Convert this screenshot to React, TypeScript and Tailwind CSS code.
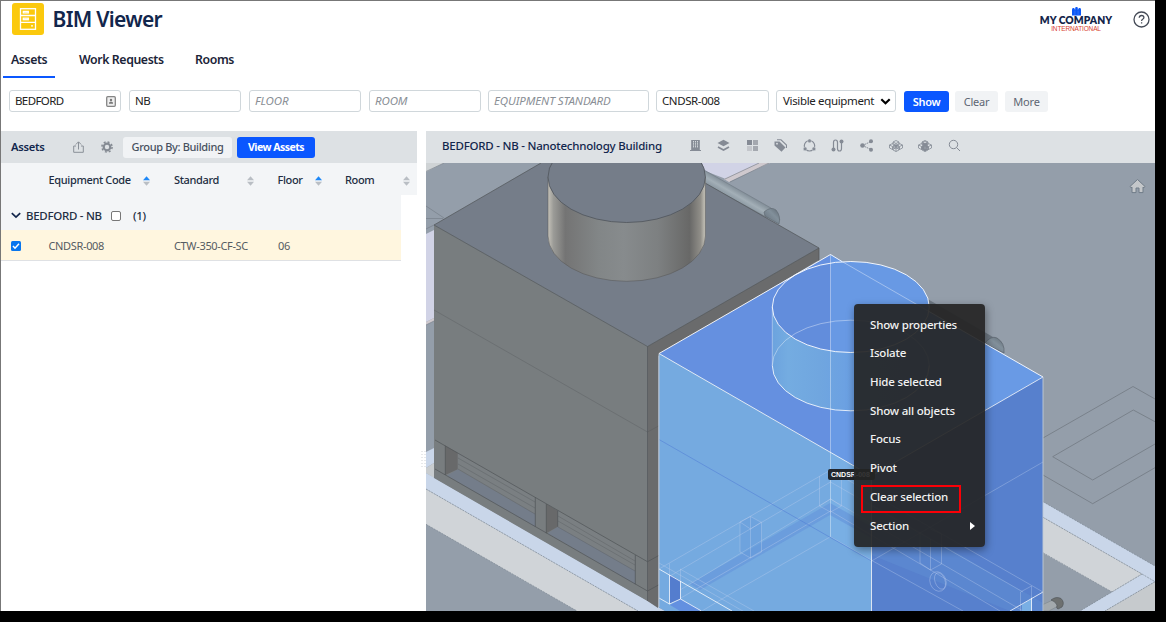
import React from "react";

const field = "h-[22px] rounded-[3px] border border-[#d0d7db] bg-white pl-[5px] text-[11.5px] leading-[20px] tracking-[-0.4px] whitespace-nowrap text-[#222]";

function AppIcon() {
  return (
    <svg className="h-8 w-8" viewBox="0 0 32 32" fill="none">
      <rect width="32" height="32" rx="3" fill="#fbc90d" />
      <g stroke="#fff" strokeWidth="1.3">
        <rect x="8.5" y="5.7" width="15" height="20.6" />
        <path d="M8.500 12.500h15M8.500 19.300h15" />
        <rect x="11.300" y="8.400" width="5" height="1.500" />
        <rect x="11.300" y="15.200" width="5" height="1.500" />
        <path d="M19 22.800h2" />
      </g>
    </svg>
  );
}

function Logo() {
  return (
    <div className="flex w-[74px] flex-col items-center pt-[6px]">
      <svg className="h-[9px] w-[9px]" viewBox="0 0 9 9">
        <g fill="#0b57f7">
          <rect x="0" y="2.300" width="9" height="6.200" />
          <rect x="0.200" y="1" width="2.400" height="2.500" rx="1" />
          <rect x="3.200" y="0" width="2.600" height="3" rx="1.100" />
          <rect x="6.400" y="1" width="2.400" height="2.500" rx="1" />
        </g>
        <path d="M2.900 3.500v5M6.100 3.500v5" stroke="#5b8df9" strokeWidth=".5" />
      </svg>
      <div className="-mt-px whitespace-nowrap font-[Lato] text-[10.300px] leading-[11px] font-extrabold tracking-[0.050px] text-[#14254a]">MY COMPANY</div>
      <div className="whitespace-nowrap font-['Liberation_Sans'] text-[6.500px] leading-[6px] tracking-[-0.150px] text-[#d8402f]">INTERNATIONAL</div>
    </div>
  );
}

function Sort({ active = false }: { active?: boolean }) {
  return (
    <svg className="h-[10px] w-[7px]" viewBox="0 0 7 10">
      <path d="M0 4.300 3.500 .3 7 4.300z" fill={active ? "#1e88f7" : "#b9bec4"} />
      <path d="M0 5.700 3.500 9.700 7 5.700z" fill="#b9bec4" />
    </svg>
  );
}

function Cubes({ solid = false }: { solid?: boolean }) {
  return (
    <svg className="h-[12px] w-[14px]" viewBox="0 0 14 12" fill="none" stroke="#858b95" strokeWidth=".8">
      <path d="M7 .5 10 2v3L7 6.500 4 5V2zM4 2l3 1.500L10 2M7 3.500v3" fill={solid ? "#a9adb4" : "none"} />
      <path d="M3.500 3.500 6.500 5v3l-3 1.500-3-1.500V5zM.5 5l3 1.500 3-1.500M3.500 6.500v3" />
      <path d="M10.500 3.500 13.500 5v3l-3 1.500-3-1.500V5zM7.500 5l3 1.500 3-1.500M10.500 6.500v3" />
      <path d="M7 5.500 10 7v3l-3 1.500L4 10V7zM4 7l3 1.500L10 7M7 8.500v3" />
      {solid && <path d="M3.500 6.500 6 5.500v2.700L3.500 9.500zM8 5.500l2.500 1v3L8 8.200zM5 2.500l2 1 2-1v2L7 5.500l-2-1zM4.500 7.500 7 8.700v2.500L4.500 10zM9.500 7.500 7 8.700v2.500L9.500 10z" fill="#858b95" stroke="none" />}
    </svg>
  );
}

function Toolbar() {
  const c = "#858b95";
  const s = "h-[13px] w-[13px]";
  return (
    <div className="flex items-center gap-[15.600px] pt-[1px]">
      <svg className={s} viewBox="0 0 13 13">
        <path d="M2.200 1h8.600v10H12v1H1v-1h1.200z" fill={c} />
        <path d="M4.500 2v7M6.500 2v7M8.500 2v7" stroke="#dde1e4" strokeWidth=".9" strokeDasharray="1.500 .7" />
      </svg>
      <svg className={s} viewBox="0 0 13 13">
        <path d="M6.500 .8 12.500 4 6.500 7.300.5 4z" fill={c} />
        <path d="M1 8l5.500 3L12 8" fill="none" stroke={c} strokeWidth="1.700" />
      </svg>
      <svg className={s} viewBox="0 0 13 13">
        <path d="M1 1h5v5H1z" fill={c} />
        <path d="M7 1h5v5H7zM7 7h5v5H7z" fill="#a4a8af" />
        <path d="M1 7h5v5H1z" fill="#c3c6cb" />
      </svg>
      <svg className={s} viewBox="0 0 13 13">
        <path d="M.5 2.500h5l6 6-4 4.200-7-6.200z" fill={c} />
        <circle cx="3" cy="4.700" r=".9" fill="#dde1e4" />
        <path d="M3 .8h4L12.500 6v3" fill="none" stroke={c} strokeWidth="1.100" />
      </svg>
      <svg className={s} viewBox="0 0 13 13">
        <circle cx="6.500" cy="6.800" r="5.200" fill="none" stroke={c} strokeWidth="1.200" />
        <g fill={c} stroke="#dde1e4" strokeWidth=".5"><circle cx="6.500" cy="1.900" r="1.900" /><circle cx="2.100" cy="9.900" r="1.900" /><circle cx="10.900" cy="9.900" r="1.900" /></g>
      </svg>
      <svg className={s} viewBox="0 0 13 13">
        <path d="M2.500 11V3.500Q2.500 1 4.500 1T6.500 3.500v6Q6.500 12 8.500 12t2-2.500V2" fill="none" stroke={c} strokeWidth="1.200" />
        <g fill={c}><circle cx="2.500" cy="10.500" r="2" /><circle cx="10.500" cy="2.500" r="2" /></g>
      </svg>
      <svg className={s} viewBox="0 0 13 13" fill={c}>
        <path d="M2.500 6.500 11 2.500M2.500 6.500 11 10.500" stroke={c} strokeDasharray="1.500 .8" />
        <circle cx="2.500" cy="6.500" r="2.300" /><circle cx="11" cy="2.300" r="2" /><circle cx="11" cy="10.700" r="2" />
      </svg>
      <Cubes />
      <Cubes solid />
      <svg className={s} viewBox="0 0 13 13" fill="none" stroke={c} strokeWidth="1">
        <circle cx="5.500" cy="5.500" r="4.200" /><path d="m8.500 8.500 3.500 3.500" />
      </svg>
    </div>
  );
}

function Scene() {
  return (
    <svg className="block h-[448px] w-[729px]" viewBox="426 163 729 448">
      <defs>
        <linearGradient id="drum">
          <stop offset="0" stopColor="#c5c2b9" /><stop offset=".035" stopColor="#9b9b97" />
          <stop offset=".11" stopColor="#747474" /><stop offset=".32" stopColor="#828687" />
          <stop offset=".48" stopColor="#878b8d" /><stop offset=".7" stopColor="#7d8081" />
          <stop offset=".9" stopColor="#686867" /><stop offset=".97" stopColor="#918f89" /><stop offset="1" stopColor="#c9c7bd" />
        </linearGradient>
        <linearGradient id="blueDrum">
          <stop offset="0" stopColor="#6ca3de" /><stop offset=".1" stopColor="#74ace1" />
          <stop offset=".3" stopColor="#70a6df" /><stop offset=".5" stopColor="#6ba0e3" /><stop offset="1" stopColor="#699de5" />
        </linearGradient>
        <linearGradient id="pipe" gradientUnits="userSpaceOnUse" x1="738" y1="188" x2="731" y2="200">
          <stop offset="0" stopColor="#7d8993" /><stop offset=".5" stopColor="#a3afb7" /><stop offset="1" stopColor="#84919b" />
        </linearGradient>
        <linearGradient id="elbow" x1="0" y1="1" x2="1" y2="0">
          <stop offset="0" stopColor="#626c76" /><stop offset=".6" stopColor="#82909b" /><stop offset="1" stopColor="#5e6871" />
        </linearGradient>
        <clipPath id="blueBody"><path d="M659 353.500 830.500 254.500 850 261 900 273 929 304 1043 377V611H659z" /></clipPath>
      </defs>
      <rect x="426" y="163" width="729" height="448" fill="#949eaa" />
      <path d="M426 163h18l-18 9z" fill="#cfd3d5" />
      <path d="M426 234l8-4v88l-8 4zM702 163h58l-34 16-21-8z" fill="#d1d3e6" />
      <path d="M426 322l8-4v3l-8 4zM759 163h11l-41 19-5-3z" fill="#cfc9ce" />
      <g stroke="#727b85" strokeWidth=".6" fill="none">
        <path d="M426 171.500 444 163M426 206l18 12M426 218.500h17M426 229l8-4M426 325l8-4M759 163l-34 16M769 163l-39 19" />
      </g>
      <path d="M426 452l8-4v15l-8 5z" fill="#c9d6e9" /><path d="M426 468l8-5v15l-8-5z" fill="#c8cccf" />
      <path d="M426 489v35.300L577 611h61z" fill="#d0d4d8" />
      <path d="M426 473 665 611h-27L426 489z" fill="#c9d6e9" />
      <path d="M1043 501.700 1155 566v15.700L1105 611h-25l32-19 30-18-99-56.700z" fill="#c9d6e9" />
      <path d="M1043 517.300 1142 574l-30 18-69-39z" fill="#d0d4d8" /><path d="M1155 581.700V611h-50z" fill="#c6cacd" />
      <g stroke="#7c8894" strokeWidth=".7" fill="none">
        <path d="M426 524.300 577 611M426 489 638 611M1043 517.300 1142 574l-62 37M1142 574l13 7.700-50 29.300M1043 552.700 1112 592M1043 501.700 1155 566" strokeDasharray="2 1" />
      </g>
      <g stroke="#727a83" strokeWidth=".8" fill="none">
        <path d="M1043 438 1133 386.500 1155 399M1155 421.700 1133.300 410 1052.700 456.700 1092.700 480 1155 444M1043 475 1092.700 503.700 1155 467.700" />
      </g>
      <path d="M704 170 771 208l9 12-14-3-62-34z" fill="url(#pipe)" stroke="#727d86" strokeWidth=".7" />
      <path d="M764 212q7-6 12-2 5 6 3 14l-14-8z" fill="url(#elbow)" stroke="#626b74" strokeWidth=".7" />
      <path d="M928 299.300 993 337l-9 9-56-34z" fill="#6f7984" />
      <path d="M984 344q7-9 13-6 8 5 7 15l-18-9z" fill="url(#elbow)" stroke="#59626c" strokeWidth=".7" />
      <path d="M1043 604.500 1055 599l3 7-9 5h-6z" fill="#a3a9ad" stroke="#7e868c" strokeWidth=".6" />
      <path d="M1051 600q5-4 10-1.500 4 4 1 8.500l-4 2q-2 0-1-4-2-4-6-5z" fill="#6d7070" stroke="#52585b" strokeWidth=".7" />

      <path d="M434 225 541 163H670L819 248 647.500 346.500z" fill="#757d89" />
      <path d="M434 225 647.500 346.500V601L434 478z" fill="#787d7f" />
      <path d="M647.500 346.500 819 248v12L658 356v252l-10.500-7z" fill="#6a6b6c" />
      <path d="M445.300 445.700 535.300 497.300v29.400L445.300 475zM546.300 504 635.300 555v29.300L546.300 533.300z" fill="#7a7f82" />
      <path d="M457.700 469.300 535.300 514.300v12.400L447 475.700zM557.700 526.700 635.300 571v13.300L547.700 533.300z" fill="#747d8a" />
      <path d="M445.300 445.700 457.700 452.700v16.600l-12.400 5.700zM546.300 504l11.400 6.700v16l-11.400 6.600z" fill="#68696a" />
      <g fill="none" stroke="#505457" strokeWidth=".7">
        <path d="M541 163 434 225 647.500 346.500 819 248 670 163M647.500 346.500V601M819 248v14" />
        <path d="M435 440 647.500 561.700l11-6M435 469l212.500 122 11-6M445.300 445.700V475M535.300 497.300v29.400M546.300 504v29.300M635.300 555v29.300M557.700 510.700v16" />
        <path d="M434 310 647.500 432l11-6M458 458l77 44M458 464l77 44M458 469l77 45M558 516l77 45M558 521l77 44M558 527l77 44" strokeOpacity=".45" />
      </g>
      <path d="M548 177v59a78.700 45.300 0 0 0 157.400 0v-59z" fill="url(#drum)" stroke="#555" strokeWidth=".5" />
      <ellipse cx="626.700" cy="177" rx="78.700" ry="45.500" fill="#757d89" stroke="#4f545a" strokeWidth=".8" />

      <path d="M659 353.500 830.500 254.500 1043 377 871.500 476z" fill="#6590e0" />
      <path d="M830.500 254.500 1043 377 871.500 476 830.500 452z" fill="#699ae5" />
      <path d="M659 353.500 871.500 476V611H665l-6-3.500z" fill="#75aae0" />
      <path d="M830.500 452 871.500 476v84l-41-24z" fill="#79afe4" />
      <path d="M871.500 476 1043 377V611H871.500z" fill="#5780cd" />
      <path d="M871.500 503 1043 603v8H1010L871.500 555z" fill="#6291d5" fillOpacity=".4" />
      <path d="M772.300 307v58.500a78.500 45.300 0 0 0 157 0V307z" fill="url(#blueDrum)" />
      <ellipse cx="850.800" cy="307" rx="78.500" ry="45.500" fill="#6899e4" />
      <path d="M830.500 263v88A78.500 45.500 0 0 1 830.500 263z" fill="#628ddc" />
      <path d="M690 584 830 503v12L700 590zM830 503 871 526v12l-41-23z" fill="#6797db" fillOpacity=".7" />
      <path d="M669.500 574.700 680.500 581v18l-11 5z" fill="#547dce" /><path d="M680.500 599 702 611h-22l-10-6z" fill="#6390e0" />
      <path d="M740 522l10.500-5.500 11 6v29l-11 6.500-10.500-6z" fill="#669bdc" fillOpacity=".45" />
      <g fill="none" stroke="#bfd0ef" strokeOpacity=".48" strokeWidth=".75" clipPath="url(#blueBody)">
        <path d="M659 569 830.500 470 1043 592M670 576 830.500 482 1023 592M680 598.500 830.500 511 1000 611M680 590 830.500 499 1023 611" />
        <path d="M727 596 830.500 536.700 871.500 560.300 963 611M727 596l-25 15M659 563 755 618M680 569 754 611M871.500 561 1043 462" />
        <path d="M740 522v30l10.500 6 11-6v-29.500l-11-6zM740 522l10.500 7 11-7M750.500 516.500V558M819.500 476v30l11 6 11-6v-30l-11-6M819.500 506l11-7 11 7M669.500 563.500v12M680.500 569v12M920 532v31l10.500 7 11-6v-30l-11-5M930.500 539v31M1020.500 592v19M1031.500 586v25M1020.500 592l11-6" />
        <path d="M659 439.500 871.500 561" stroke="#4f7bd6" strokeOpacity=".7" />
        <ellipse cx="938" cy="581.500" rx="8" ry="10" transform="rotate(-20 938 581.500)" /><ellipse cx="940" cy="581" rx="5" ry="8.500" transform="rotate(-20 940 581)" />
      </g>
      <path d="M1022 604.500 1031.500 599v12H1022z" fill="#79afe4" />
      <g fill="none" stroke="#fff" strokeWidth=".9">
        <path d="M1043 377 871.500 476 659 353.500M871.500 476V611M659 569 732 611M669.500 575v29M680.500 581v18M669.500 604l11-5 21 12M659 598l10.500 6M1043 592 1010 611M1031.500 598v13" strokeOpacity=".85" />
        <path d="M659 353.500 830.500 254.500 842 261.500M929 311.500 1043 377" />
        <ellipse cx="850.800" cy="307" rx="78.500" ry="45.500" />
        <path d="M772.300 365.500a78.500 45.300 0 0 0 157 0" strokeOpacity=".9" />
        <path d="M772.300 365.500a78.500 45.300 0 0 1 157 0M842 261.500 929 311.500M772.300 307v58.500M830.500 254.500V536.700" strokeOpacity=".42" />
        <path d="M659 353.500V607M1043 377V611" stroke="#c0cad7" />
      </g>
      <g transform="translate(1129.500 179)">
        <path d="M.5 7.500 8 .5l7.500 7-1 1.300-1-.7v5.500h-4V9h-3v4.600h-4V8.100l-1 .7z" fill="#c4c7ca" stroke="#707c88" strokeWidth="1" />
      </g>
    </svg>
  );
}

const menu = ["Show properties", "Isolate", "Hide selected", "Show all objects", "Focus", "Pivot", "Clear selection", "Section"];

function ContextMenu() {
  return (
    <div className="absolute top-[141px] left-[428px] h-[243px] w-[131px] rounded-[4px] bg-[#242424]/92 pt-[6px] shadow-[1px_3px_8px_rgba(0,0,0,0.4)]">
      {menu.map((m) => (
        <div key={m} className="relative flex h-[28.700px] items-center justify-between pr-[10px] pl-4 text-[11.500px] font-medium tracking-[-0.180px] whitespace-nowrap text-[#f2f2f2]">
          <span>{m}</span>
          {m === "Clear selection" && <span className="absolute top-[3px] left-[7px] h-[28px] w-[100px] border-2 border-[#fb0007]" />}
          {m === "Section" && <svg className="mt-px h-2 w-[5px]" viewBox="0 0 5 8"><path d="M0 0l5 4-5 4z" fill="#fff" /></svg>}
        </div>
      ))}
    </div>
  );
}

export default function App() {
  return (
    <div className="h-[622px] w-[1166px] overflow-hidden bg-black font-['Noto_Sans',sans-serif]">
      <div className="h-[611px] w-[1155px] border-t border-l border-[#777] bg-white text-[#12264c]">
        <header className="flex h-[40px] items-start justify-between pr-[5px] pl-[11px]">
          <div className="flex pt-[2px]">
            <AppIcon />
            <h1 className="ml-[8.500px] text-[21px] leading-[32px] font-semibold tracking-[-0.700px]">BIM Viewer</h1>
          </div>
          <div className="flex">
            <Logo />
            <svg className="mt-[10px] ml-[20px] h-[17px] w-[17px]" viewBox="0 0 17 17" fill="none" stroke="#454b57">
              <circle cx="8.500" cy="8.500" r="7.500" strokeWidth="1.300" />
              <path d="M6.200 6.800Q6.400 4.500 8.600 4.500T10.900 6.500Q10.900 7.500 9.600 8.300 8.600 8.900 8.600 10M8.600 11.300v1.300" strokeWidth="1.300" />
            </svg>
          </div>
        </header>
        <nav className="flex h-[37px] pl-[2px] text-[12.300px] leading-[38px] font-semibold tracking-[-0.400px] text-[#1b2438]">
          <div className="w-[52px] border-b-2 border-[#0a57ff] pl-[8px]">Assets</div>
          <div className="w-[116px] pl-[24px] whitespace-nowrap">Work Requests</div>
          <div className="pl-[24px]">Rooms</div>
        </nav>
        <div className="flex h-[53px] items-start pt-[12px] pl-[8px]">
          <div className={`${field} flex w-[112px] items-center justify-between pr-[4px]`}>
            <span className="tracking-[-0.600px]">BEDFORD</span>
            <svg className="h-[11px] w-[10px]" viewBox="0 0 10 11"><rect x=".7" y=".7" width="8.600" height="9.600" rx="1" fill="#eee" stroke="#858585" strokeWidth="1.300" /><circle cx="5" cy="4" r="1.200" fill="#777" /><path d="M3 7.800h4V6.500L5 5.400 3 6.500z" fill="#777" /></svg>
          </div>
          <div className={`${field} ml-[8px] w-[112px]`}>NB</div>
          <div className={`${field} ml-[8px] w-[112px]`}><i className="tracking-[-0.100px] text-[#8a8f96]">FLOOR</i></div>
          <div className={`${field} ml-[8px] w-[112px]`}><i className="tracking-[-0.100px] text-[#8a8f96]">ROOM</i></div>
          <div className={`${field} ml-[7px] w-[161px]`}><i className="tracking-[-0.100px] text-[#8a8f96]">EQUIPMENT STANDARD</i></div>
          <div className={`${field} ml-[7px] w-[113px]`}>CNDSR-008</div>
          <div className={`${field} ml-[7px] flex w-[120px] items-center justify-between pr-[4px] pl-[6px]`}>
            <span className="tracking-[-0.350px]">Visible equipment</span>
            <svg className="h-[7px] w-[11px]" viewBox="0 0 11 7"><path d="m1.300 1.200 4.200 4 4.200-4" fill="none" stroke="#000" strokeWidth="2.200" /></svg>
          </div>
          <button className="mt-px ml-[8px] h-[21px] w-[45px] rounded-[3px] bg-[#0a57ff] pt-px text-[11px] font-semibold tracking-[-0.300px] text-white">Show</button>
          <button className="mt-px ml-[6px] h-[21px] w-[43px] rounded-[3px] bg-[#f1f3f5] pt-px text-[11px] tracking-[-0.200px] text-[#5d6673]">Clear</button>
          <button className="mt-px ml-[7px] h-[21px] w-[43px] rounded-[3px] bg-[#f1f3f5] pt-px text-[11px] tracking-[-0.200px] text-[#5d6673]">More</button>
        </div>
        <main className="flex">
          <section className="w-[416px]">
            <div className="flex h-[32px] items-center bg-[#dde1e4] pl-[10px]">
              <b className="w-[62px] pt-px text-[11.200px] font-semibold tracking-[-0.300px]">Assets</b>
              <svg className="h-[12px] w-[11px]" viewBox="0 0 11 12" fill="none" stroke="#8a9098"><path d="M3 5H.7v6.300h9.600V5H8M5.500 8.500V1M2.800 3.500 5.500.8l2.700 2.700" /></svg>
              <svg className="ml-[17px] h-[12px] w-[12px]" viewBox="0 0 12 12" fill="none" stroke="#858b93"><circle cx="6" cy="6" r="3.300" strokeWidth="2.200" /><circle cx="6" cy="6" r="5.100" strokeWidth="1.500" strokeDasharray="2 2" /></svg>
              <button className="ml-[10px] h-[21px] w-[109px] rounded-[3px] bg-[#f1f3f5] text-[11px] font-medium tracking-[-0.350px] text-[#47505e]">Group By: Building</button>
              <button className="ml-[5px] h-[21px] w-[78px] rounded-[3px] bg-[#0a57ff] pt-px text-[10.500px] font-bold tracking-[-0.500px] text-white">View Assets</button>
            </div>
            <div className="flex h-[32px] items-center bg-[#f3f5f7] pt-[3px] pl-[47.500px] text-[11px] font-medium tracking-[-0.350px] text-[#222d42]">
              <span className="w-[94.500px]">Equipment Code</span><Sort active />
              <span className="ml-[24px] w-[73px]">Standard</span><Sort />
              <span className="ml-[23.500px] w-[37.500px]">Floor</span><Sort active />
              <span className="ml-[23px] w-[58px]">Room</span><Sort />
            </div>
            <div className="flex h-[35px] w-[400px] items-center bg-[#f3f5f7] pt-[6px] pl-[10px] text-[11.500px] font-medium tracking-[-0.280px] text-[#222d42]">
              <svg className="h-[7px] w-[10px]" viewBox="0 0 10 7"><path d="m.8 1.200 4.200 4 4.200-4" fill="none" stroke="#12264c" strokeWidth="1.700" /></svg>
              <span className="ml-[5px] w-[85px] whitespace-nowrap">BEDFORD - NB</span>
              <span className="h-[10px] w-[10px] rounded-[2px] border border-[#777] bg-white" />
              <span className="ml-[12px]">(1)</span>
            </div>
            <div className="flex h-[31px] w-[400px] items-center border-b border-[#dfe1e4] bg-[#fff6df] pt-px pl-[10px] text-[11px] tracking-[-0.350px] text-[#555b62]">
              <svg className="h-[10px] w-[10px]" viewBox="0 0 10 10"><rect width="10" height="10" rx="1.500" fill="#0876ee" /><path d="m2 5 2 2.200 4-4.500" fill="none" stroke="#fff" strokeWidth="1.500" /></svg>
              <span className="ml-[27.500px] w-[125.500px] pt-px">CNDSR-008</span><span className="w-[104px] pt-px">CTW-350-CF-SC</span><span className="pt-px">06</span>
            </div>
          </section>
          <div className="flex h-[480px] w-[9px] items-end justify-center pb-[142px] pl-[3px]">
            <svg className="h-[18px] w-[5px]" viewBox="0 0 5 18"><path d="M1 0v18M4 0v18" stroke="#cfd2d6" strokeDasharray="1 2" /></svg>
          </div>
          <section className="w-[729px]">
            <div className="flex h-[32px] items-center bg-[#dde1e4] pl-[16px]">
              <b className="w-[246.500px] pb-[2px] text-[11.500px] font-medium tracking-[-0.230px] whitespace-nowrap">BEDFORD - NB - Nanotechnology Building</b>
              <div className="pb-[4px]"><Toolbar /></div>
            </div>
            <div className="relative h-[448px] w-[729px]">
              <Scene />
              <div className="absolute top-[306px] left-[402px] h-[11px] w-[47px] rounded-[2px] bg-[#22272e] pl-[3px] font-['Liberation_Sans'] text-[7px] leading-[11px] font-bold text-white">CNDSR-008</div>
              <ContextMenu />
            </div>
          </section>
        </main>
      </div>
    </div>
  );
}
